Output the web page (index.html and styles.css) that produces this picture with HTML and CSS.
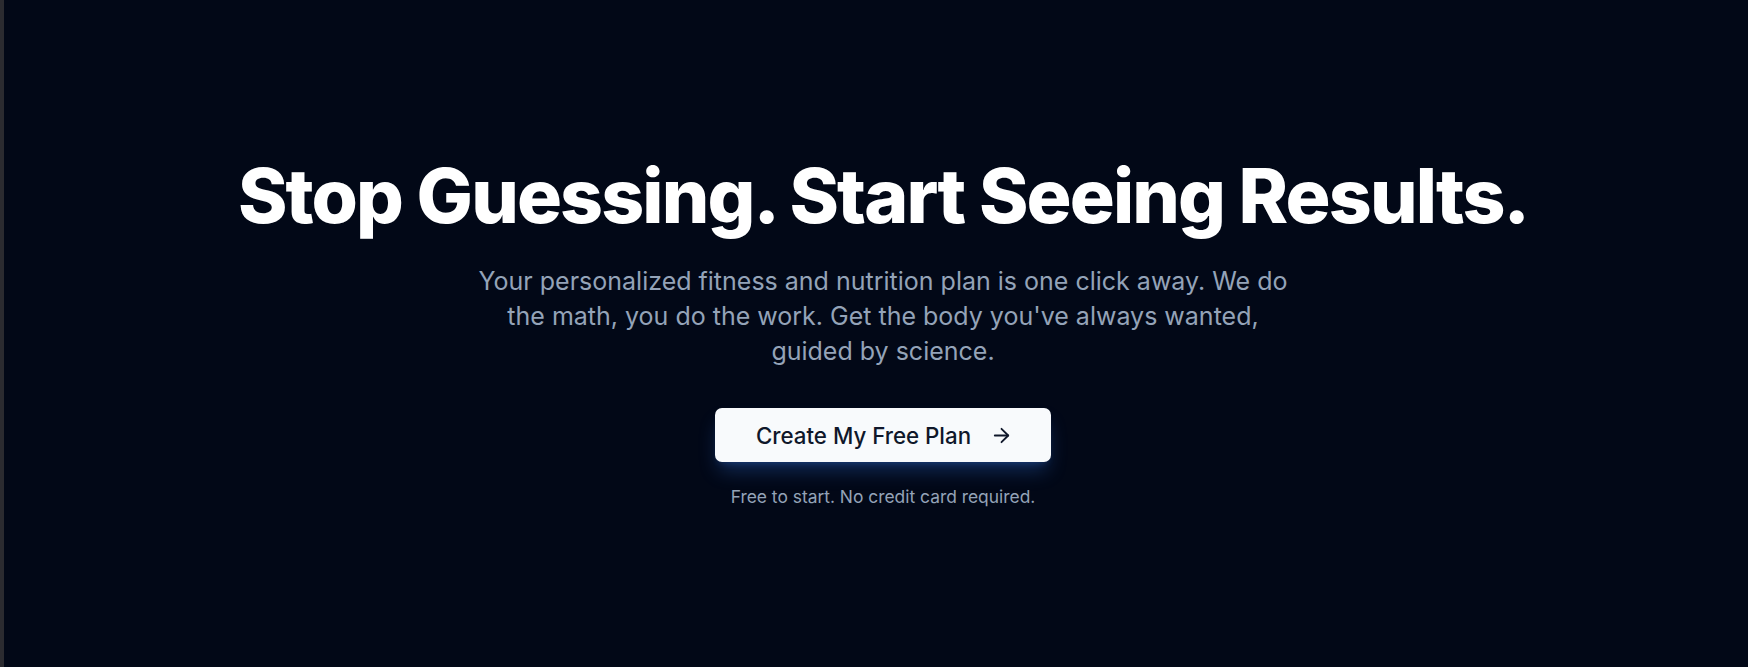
FILE: index.html
```html
<!DOCTYPE html>
<html lang="en">
<head>
<meta charset="utf-8">
<title>Stop Guessing. Start Seeing Results.</title>
<link rel="stylesheet" href="styles.css">
</head>
<body>
  <div class="edge"></div>
  <main class="hero">
    <h1 class="hero-title">Stop Guessing. Start Seeing Results.</h1>
    <p class="hero-lead">Your personalized fitness and nutrition plan is one click away. We do the math, you do the work. Get the body you've always wanted, guided by science.</p>
    <a class="cta" href="#">
      <span>Create My Free Plan</span>
      <svg class="cta-icon" viewBox="0 0 24 24" fill="none" stroke="currentColor" stroke-width="1.9" stroke-linecap="round" stroke-linejoin="round" aria-hidden="true">
        <path d="M5 12h14"/>
        <path d="m12 5 7 7-7 7"/>
      </svg>
    </a>
    <p class="hero-note">Free to start. No credit card required.</p>
  </main>
</body>
</html>
```
FILE: styles.css
```css
* {
  box-sizing: border-box;
}

html, body {
  margin: 0;
  height: 100%;
}

body {
  display: flex;
  background: #020817;
  font-family: Inter, "Noto Sans", "Liberation Sans", sans-serif;
  color: #f8fafc;
  overflow: hidden;
}

.edge {
  width: 4px;
  flex: none;
  background: #2b2b30;
}

.hero {
  flex: 1;
  display: flex;
  flex-direction: column;
  align-items: center;
  justify-content: center;
  text-align: center;
  padding-left: 14px;
}

.hero-title {
  margin: 0;
  font-size: 75px;
  line-height: 1;
  font-weight: 800;
  letter-spacing: -0.025em;
  color: #ffffff;
}

.hero-lead {
  margin: 31px 0 0;
  max-width: 820px;
  font-size: 25px;
  line-height: 35px;
  color: #94a3b8;
}

.cta {
  margin-top: 39.5px;
  display: inline-flex;
  align-items: center;
  gap: 19px;
  height: 54px;
  padding: 0 38px 0 41px;
  border-radius: 7px;
  background: #f8fafc;
  color: #0f172a;
  font-size: 22.3px;
  font-weight: 500;
  text-decoration: none;
  box-shadow: 0 12px 20px -4px rgba(59, 130, 246, 0.3), 0 5px 8px -5px rgba(59, 130, 246, 0.3);
}

.cta-icon {
  width: 23px;
  height: 23px;
}

.hero-note {
  margin: 22.5px 0 0;
  font-size: 17.4px;
  line-height: 24.8px;
  color: #94a3b8;
}
```
